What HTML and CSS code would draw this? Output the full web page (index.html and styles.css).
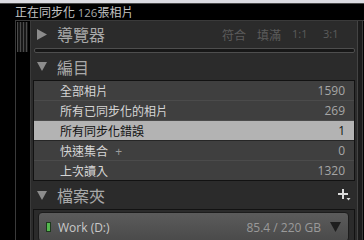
FILE: index.html
```html
<!DOCTYPE html>
<html lang="zh-Hant">
<head>
  <meta charset="UTF-8" />
  <title>圖庫</title>
  <link rel="stylesheet" href="styles.css">
</head>
<body>

  <!-- Window strip + sync status -->
  <div class="topbar"></div>
  <div class="status">正在同步化 <span class="status-num">126</span>張相片</div>

  <!-- Left panel -->
  <div class="frame">
    <div class="gutter"><div class="grip"></div></div>

    <div class="panel">
      <!-- Navigator -->
      <div class="head head-nav">
        <svg class="tri" width="10" height="11" viewBox="0 0 10 11"><polygon points="0,0 10,5.5 0,11" /></svg>
        <span class="title">導覽器</span>
        <div class="zoom">
          <span class="fit">符合</span>
          <span class="fill">填滿</span>
          <span class="ratio one">1:1</span>
          <span class="ratio">3:1</span>
        </div>
      </div>
      <div class="navbar"></div>

      <!-- Catalog -->
      <div class="head head-cat">
        <svg class="tri" width="10" height="9" viewBox="0 0 10 9"><polygon points="0,0 10,0 5,9" /></svg>
        <span class="title">編目</span>
      </div>
      <ul class="list">
        <li class="row"><span>全部相片</span><span class="count">1590</span></li>
        <li class="row"><span>所有已同步化的相片</span><span class="count">269</span></li>
        <li class="row selected"><span>所有同步化錯誤</span><span class="count">1</span></li>
        <li class="row"><span>快速集合 <span class="add">+</span></span><span class="count">0</span></li>
        <li class="row"><span>上次讀入</span><span class="count">1320</span></li>
      </ul>

      <!-- Folders -->
      <div class="head head-fold">
        <svg class="tri" width="10" height="9" viewBox="0 0 10 9"><polygon points="0,0 10,0 5,9" /></svg>
        <span class="title">檔案夾</span>
        <svg class="plus" width="13" height="12" viewBox="0 0 13 12">
          <rect x="4" y="0" width="2" height="10" />
          <rect x="0" y="4" width="10" height="2" />
          <polygon points="8.5,9 12.5,9 10.5,11.5" />
        </svg>
      </div>
      <div class="folders">
        <div class="volume">
          <span class="led"></span>
          <span class="vol-name">Work (D:)</span>
          <span class="vol-size">85.4 / 220 GB</span>
          <svg class="vol-tri" width="11" height="10" viewBox="0 0 11 10"><polygon points="0,0 11,0 5.5,10" /></svg>
        </div>
      </div>
    </div>

    <div class="edge"></div>
  </div>

</body>
</html>
```

FILE: styles.css
```css
body {
  margin: 0;
  width: 364px;
  height: 240px;
  overflow: hidden;
  background: #000;
  font-family: "Open Sans", "Noto Sans CJK TC", sans-serif;
}
.topbar {
  height: 3px;
  background: #dcdce2;
  border-bottom: 1px solid #4a4a4a;
}
.status {
  height: 16px;
  line-height: 16px;
  padding-left: 15px;
  font-family: "Noto Sans CJK TC", sans-serif;
  font-size: 12px;
  color: #c4c4c4;
}
.status-num {
  font-family: "Open Sans", sans-serif;
  font-size: 11.5px;
  color: #a8a8a8;
}
.frame {
  display: flex;
  height: 219px;
  margin-left: 15px;
  border-top: 1px solid #3a3a3a;
  border-left: 1px solid #3a3a3a;
}
.gutter {
  width: 14px;
  border-right: 1px solid #3a3a3a;
  background: #000;
}
.grip {
  height: 30px;
  margin: 1px 2px 0 1px;
  background: repeating-linear-gradient(90deg, #4a4a4a 0 1px, #181818 1px 3px);
}
.panel {
  width: 326px;
  overflow: hidden;
  background: #2b2b2b;
}
.edge {
  width: 4px;
  border-left: 1px solid #444;
  border-right: 1px solid #3a3a3a;
  background: #1c1c1c;
}

/* Section headers */
.head {
  display: flex;
  align-items: center;
  padding-left: 6px;
}
.head-nav { height: 26px; }
.head-cat { height: 27px; }
.head-fold { height: 28px; }
.tri {
  fill: #8c8c8c;
  width: 10px;
  margin-right: 10px;
}
.title {
  font-family: "Noto Sans CJK TC", sans-serif;
  font-size: 16px;
  color: #a9a9a9;
}
.zoom {
  display: flex;
  margin-left: auto;
  margin-right: 19px;
  font-family: "Noto Sans CJK TC", sans-serif;
  font-size: 12px;
  color: #5c5c5c;
}
.zoom .fit { margin-right: 11px; }
.zoom .fill { margin-right: 11px; }
.zoom .ratio {
  font-family: "Open Sans", sans-serif;
  font-size: 11px;
  width: 15px;
  text-align: center;
}
.zoom .one { margin-right: 16px; }
.navbar {
  height: 3px;
  margin: 1px 2px 0 3px;
  border: 1px solid #4e4e4e;
  border-radius: 2px;
  background: #171717;
}
.plus {
  fill: #dcdcdc;
  margin-left: auto;
  margin-right: 6px;
}

/* Catalog list */
.list {
  list-style: none;
  margin: 0 2px;
  padding: 0;
  border: 1px solid #121212;
}
.row {
  display: flex;
  justify-content: space-between;
  align-items: center;
  height: 19px;
  padding: 0 9px 0 26px;
  background: #3f3f3f;
  border-bottom: 1px solid #4b4b4b;
  font-size: 12px;
  color: #d6d6d6;
}
.row:last-child { border-bottom: 0; }
.row .count { color: #a6a6a6; }
.row .add { color: #9c9c9c; margin-left: 4px; }
.row.selected {
  background: #b3b3b3;
  border-bottom-color: #262626;
  color: #111;
}
.row.selected .count { color: #111; }

/* Folders */
.folders {
  margin: 0 2px;
  padding: 2px 5px 0 4px;
  height: 29px;
  border: 1px solid #121212;
  border-bottom: 0;
}
.volume {
  display: flex;
  align-items: center;
  height: 28px;
  padding: 0 7px;
  border: 1px solid #1c1c1c;
  border-radius: 4px;
  background: linear-gradient(#5b5b5b, #4a4a4a);
  font-size: 12px;
}
.led {
  width: 3px;
  height: 8px;
  border: 1px solid #1d3a1d;
  background: #55b94f;
  margin-right: 7px;
}
.vol-name { color: #c9c9c9; }
.vol-size {
  margin-left: auto;
  margin-right: 9px;
  color: #9a9a9a;
}
.vol-tri { fill: #1e1e1e; }
```
